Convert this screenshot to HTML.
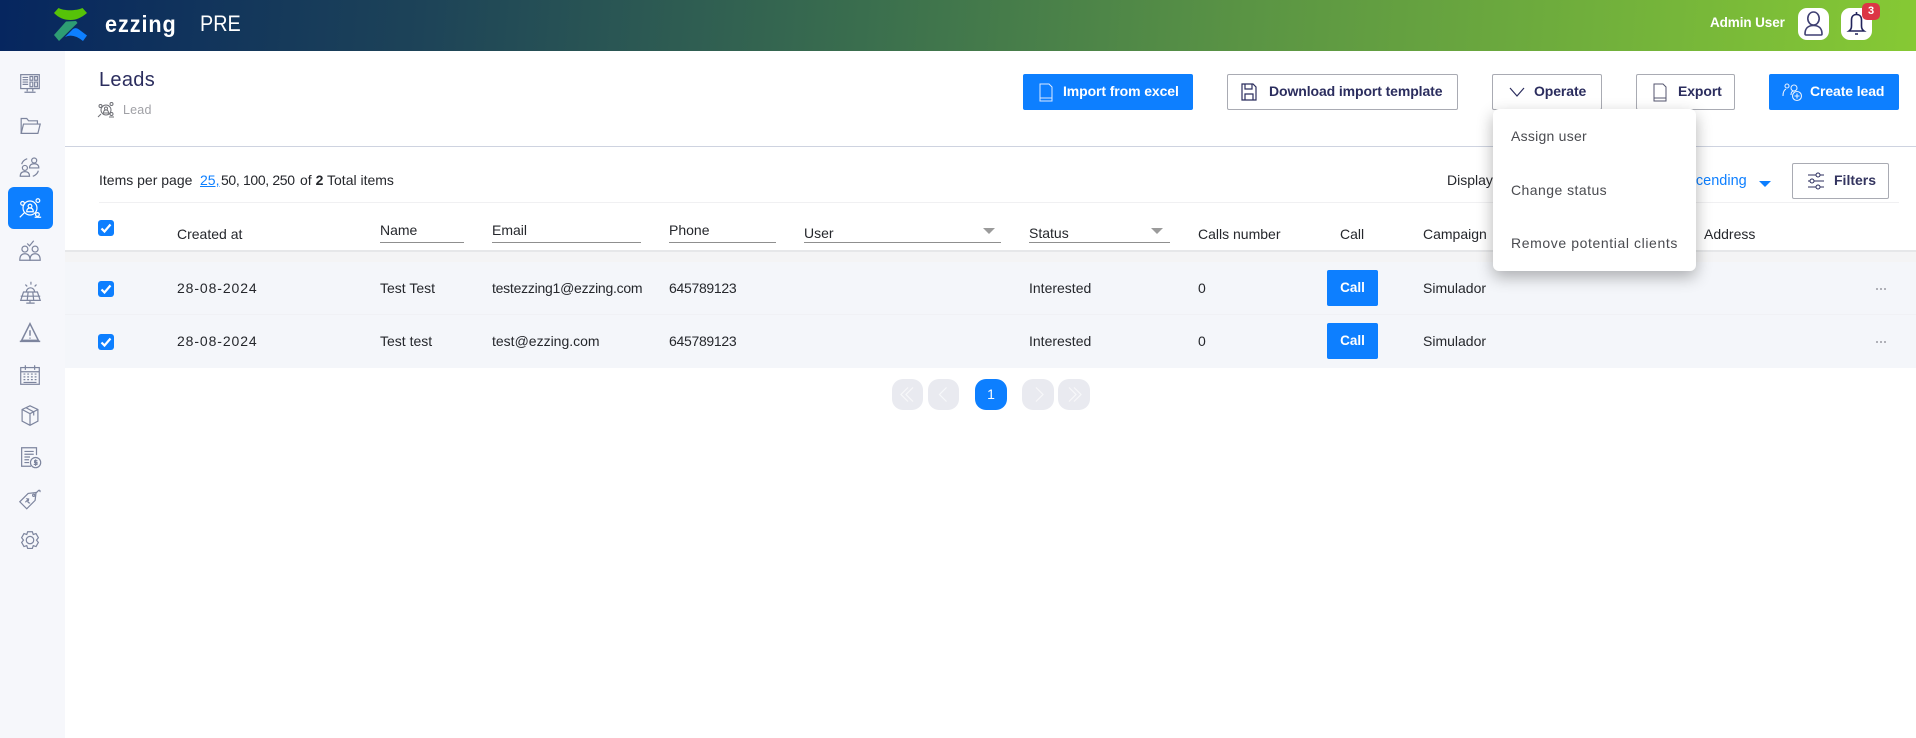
<!DOCTYPE html>
<html lang="en"><head><meta charset="utf-8"><title>Leads</title>
<style>
*{box-sizing:border-box}
html,body{margin:0;padding:0;width:1916px;height:738px;overflow:hidden;background:#fff;font-family:"Liberation Sans",sans-serif;color:#212529}
.a{position:absolute}
.t{position:absolute;white-space:nowrap;font-size:14px;line-height:20px;height:20px;color:#25272c}
.btn{position:absolute;top:74px;height:36px;border-radius:2px;font-size:14px;font-weight:bold;line-height:36px;white-space:nowrap;letter-spacing:-.1px}
.blue{background:#0d7fff;color:#fff}
.out{background:#fff;border:1px solid #a9abb3;color:#2b2d5e}
.btn svg{position:absolute;top:8px}
.btn span{position:absolute;top:-1px}
.cb{position:absolute;left:98px;width:16px;height:16px;background:#0d7fff;border-radius:3px}
.ul{position:absolute;height:1px;background:#8f8f8f;top:242px}
.tri{position:absolute;width:0;height:0;border-left:6px solid transparent;border-right:6px solid transparent;border-top:6px solid #9b9b9b;top:228px}
.call{position:absolute;left:1327px;width:51px;height:36px;background:#0d7fff;border-radius:2px;color:#fff;font-weight:bold;font-size:13.5px;line-height:36px;text-align:center}
.pg{position:absolute;top:379px;height:31px;border-radius:11px;background:#e9eaf0}
.dot{position:absolute;width:2px;height:2px;border-radius:50%;background:#9a9ba2}
.ic{position:absolute;left:17px;width:26px;height:26px;fill:none;stroke:#7d859e;stroke-width:1.3}
.mi{position:absolute;left:1511px;font-size:14px;line-height:20px;color:#4a4b50;letter-spacing:.25px;white-space:nowrap}
.num{letter-spacing:-.3px}
.date{letter-spacing:.9px}
</style></head><body>

<!-- top bar -->
<div class="a" style="left:0;top:0;width:1916px;height:51px;background:linear-gradient(95deg,#06265f 0%,#1d4358 22%,#3a6e4e 45%,#5a9444 65%,#86c934 100%)"></div>
<svg class="a" style="left:40px;top:0" width="70" height="50" viewBox="0 0 70 50">
<path d="M14 13L18.500 8C24 11 36 11 42.500 8L47 13C41 18 36 20 30.500 20C24 20 19 18 14 13Z" fill="#56c208"/>
<path d="M26 21.500L36 21L37.500 23L19 41L14 35Z" fill="#2e9d73"/>
<path d="M25 37L33 29Q36 27 39 29.500L47 35.500L43 41Q33 33 25 37Z" fill="#0d7fff"/>
</svg>
<div class="t" style="left:105px;top:10px;font-size:23px;line-height:28px;height:28px;font-weight:bold;color:#fff;letter-spacing:1px;transform:scaleX(.94);transform-origin:left">ezzing</div>
<div class="t" style="left:200px;top:10px;font-size:22px;line-height:28px;height:28px;color:#fff;transform:scaleX(.9);transform-origin:left">PRE</div>
<div class="t" style="left:1710px;top:13px;font-size:13.5px;color:#fff;font-weight:bold;letter-spacing:-.1px">Admin User</div>
<div class="a" style="left:1798px;top:8px;width:31px;height:32px;background:#fff;border-radius:9px"></div>
<svg class="a" style="left:1798px;top:8px" width="31" height="32" viewBox="0 0 31 32" fill="none" stroke="#3e3f72" stroke-width="1.6"><ellipse cx="15.500" cy="10.500" rx="5.700" ry="6.500"/><path d="M7 26c0-6 3.500-8.500 8.500-8.500S24 20 24 26c0 .7-.5 1-1 1H8c-.6 0-1-.4-1-1z"/></svg>
<div class="a" style="left:1841px;top:8px;width:31px;height:32px;background:#fff;border-radius:9px"></div>
<svg class="a" style="left:1841px;top:8px" width="31" height="32" viewBox="0 0 31 32" fill="none" stroke="#22245c" stroke-width="1.6"><path d="M15.500 4v2.500M10.500 12c0-3.500 2-5.500 5-5.500s5 2 5 5.500v6c0 2 1 4 2.500 5H8c1.500-1 2.500-3 2.500-5zM8 23h15M14 26h3"/></svg>
<div class="a" style="left:1862px;top:3px;width:18px;height:17px;background:#dc3545;border-radius:5px;color:#fff;font-size:11px;font-weight:bold;line-height:17px;text-align:center">3</div>

<!-- sidebar -->
<div class="a" style="left:0;top:51px;width:65px;height:687px;background:#f6f7fb"></div>
<div class="a" style="left:8px;top:187px;width:45px;height:42px;background:#0d7fff;border-radius:6px"></div>

<svg class="ic" style="top:70px" viewBox="0 0 28 28"><rect x="4" y="5" width="20" height="15"/><path d="M6 8h6M6 10.500h6M6 13h6M6 15.500h6M14 7h3v4h-3zM19 7h3v4h-3zM14 13h3v5h-3zM19 13h3v5h-3zM11 20v3M17 20v3M8 24h12" /></svg>
<svg class="ic" style="top:112px" viewBox="0 0 28 28"><path d="M6 23H4.500V7h6l2 2.500H22V13"/><path d="M7 13h18l-2.500 10H4.500z"/></svg>
<svg class="ic" style="top:154px" viewBox="0 0 28 28"><circle cx="18.500" cy="7" r="2.700"/><path d="M13.500 15c0-3 2-4.500 5-4.500s5 1.500 5 4.500z"/><circle cx="8.500" cy="15" r="2.700"/><path d="M3.500 24c0-3.500 2-5 5-5s5 1.500 5 5z"/><path d="M5 11c.8-3 3-5 6-6M23 18c-.8 3-3 5-6 6"/></svg>
<svg class="ic" style="top:195px;stroke:#fff" viewBox="0 0 28 28"><circle cx="14" cy="14" r="7.500"/><circle cx="14" cy="12" r="2"/><path d="M10.500 18c0-3 1.500-4 3.500-4s3.500 1 3.500 4z"/><circle cx="6" cy="9" r="2"/><circle cx="22.500" cy="6" r="2"/><circle cx="22" cy="21" r="2"/><path d="M3 24l5-5M19 24h7"/></svg>
<svg class="ic" style="top:237px" viewBox="0 0 28 28"><circle cx="8.500" cy="13" r="3.200"/><path d="M3 25c0-5 2-7 5.500-7s5.500 2 5.500 7z"/><circle cx="19.500" cy="13" r="3.200"/><path d="M14 25c0-5 2-7 5.500-7s5.500 2 5.500 7z"/><path d="M11 7l2.500 2.500L18 4"/></svg>
<svg class="ic" style="top:279px" viewBox="0 0 28 28"><path d="M7 14h15l3 9H4zM4 18.500h21M12 14l-1 9M17 14l1 9M14 23v3M10 26h9M10 14a4.500 4.500 0 0 1 9 0M15 3v3M9 6l2 2M21 6l-2 2"/></svg>
<svg class="ic" style="top:320px;stroke-width:1.600" viewBox="0 0 28 28"><path d="M14 4L23 22H5zM14 11v6M14 19v1M3 23h22"/></svg>
<svg class="ic" style="top:362px" viewBox="0 0 28 28"><rect x="4" y="6" width="20" height="18"/><path d="M9 3.500v5M19 3.500v5M4 10.500h20M7 13h2M11 13h2M15 13h2M19 13h2M7 16h2M11 16h2M15 16h2M19 16h2M7 19h2M11 19h2M15 19h2M19 19h2M7 22h14"/></svg>
<svg class="ic" style="top:403px" viewBox="0 0 28 28"><path d="M14 3l8.500 4v12.500L14 24l-8.500-4.500V7zM5.500 7l8.500 4.500L22.500 7M14 11.500V24M9.500 5l8.500 4.500v4"/></svg>
<svg class="ic" style="top:444px" viewBox="0 0 28 28"><path d="M21 12V4H5v20h10"/><path d="M8 8h10M8 11h10M8 14h6M8 17h5M8 20h5"/><circle cx="20" cy="20" r="5.500"/><path d="M22 18h-3v2h2.500v2H18M20 16.500v7"/></svg>
<svg class="ic" style="top:486px" viewBox="0 0 28 28"><path d="M21 7L12 8 3 17l7.500 7.500 9-9 1-8.500z"/><circle cx="18" cy="10" r="1.200"/><path d="M20 8l3-3c1-1 2.500 0 1.500 1.500M9 17.500l4-4M10 14c1-1 3 1 2 2s1 3 2 2"/></svg>
<svg class="ic" style="top:528px" viewBox="0 0 28 28"><path d="M11.500 4h5l1 3 3-1 2.500 4.500-2 2.500 2 2.500-2.500 4.500-3-1-1 3h-5l-1-3-3 1L5 15.500 7 13l-2-2.500L7.500 6l3 1z"/><circle cx="14" cy="13" r="4"/></svg>

<!-- title -->
<div class="t" style="left:99px;top:68px;font-size:20px;line-height:24px;height:24px;color:#2b2d5e;letter-spacing:.3px">Leads</div>
<svg class="a" style="left:97px;top:101px" width="18" height="18" viewBox="0 0 18 18" fill="none" stroke="#6f7076" stroke-width="1"><circle cx="9" cy="9" r="5"/><circle cx="9" cy="7.500" r="1.500"/><path d="M6.500 12c0-2 1-3 2.500-3s2.500 1 2.500 3zM1 16l3-3M12 16h5"/><circle cx="3.500" cy="5" r="1.500"/><circle cx="14.500" cy="3" r="1.500"/><circle cx="14.500" cy="13" r="1.500"/></svg>
<div class="t" style="left:123px;top:100px;font-size:12.500px;color:#a0a1a6;letter-spacing:.2px">Lead</div>
<div class="a" style="left:65px;top:146px;width:1851px;height:1px;background:#ced3e0"></div>

<!-- buttons -->
<div class="btn blue" style="left:1023px;width:170px"><svg style="left:14px" width="18" height="20" viewBox="0 0 18 20" fill="none" stroke="#dbe9ff" stroke-width="1"><path d="M3 2h9l3 3v14H3zM3 16h12"/></svg><span style="left:40px">Import from excel</span></div>
<div class="btn out" style="left:1227px;width:231px;line-height:34px"><svg style="left:12px;top:7px" width="18" height="20" viewBox="0 0 18 20" fill="none" stroke="#2b2d5e" stroke-width="1.200"><path d="M2 2h11l3 3v13H2zM5 2v5h7V2M5 18v-6h8v6"/></svg><span style="left:41px">Download import template</span></div>
<div class="btn out" style="left:1492px;width:110px;line-height:34px"><svg style="left:15px;top:7px" width="18" height="20" viewBox="0 0 18 20" fill="none" stroke="#2b2d5e" stroke-width="1.200"><path d="M2 6l7 8 7-8"/></svg><span style="left:41px">Operate</span></div>
<div class="btn out" style="left:1636px;width:99px;line-height:34px"><svg style="left:14px;top:7px" width="18" height="20" viewBox="0 0 18 20" fill="none" stroke="#55566f" stroke-width="1"><path d="M3 2h9l3 3v14H3zM3 16h12"/></svg><span style="left:41px">Export</span></div>
<div class="btn blue" style="left:1769px;width:130px"><svg style="left:13px;top:8px" width="22" height="20" viewBox="0 0 22 20" fill="none" stroke="#e4efff" stroke-width="1.100"><circle cx="12" cy="6" r="3"/><path d="M1 14c0-4 1-6 3-7M9 13c0-3 1-4 3-4"/><circle cx="5" cy="4" r="2"/><circle cx="15" cy="14" r="4.500"/><path d="M15 11.500v5M12.500 14h5"/></svg><span style="left:41px">Create lead</span></div>

<!-- toolbar -->
<div class="t" style="left:99px;top:170px;font-size:14px">Items per page</div>
<div class="t" style="left:200px;top:170px;font-size:14px;color:#0d7fff;text-decoration:underline">25,</div>
<div class="t" style="left:221px;top:170px;font-size:14px;letter-spacing:-.35px">50, 100, 250</div>
<div class="t" style="left:300px;top:170px;font-size:14px">of <b>2</b> Total items</div>
<div class="t" style="left:1447px;top:170px;font-size:14px">Display</div>
<div class="t" style="left:1679px;top:171px;font-size:14.500px;color:#0d7fff">Ascending</div>
<div class="a" style="left:1759px;top:181px;width:0;height:0;border-left:6px solid transparent;border-right:6px solid transparent;border-top:6px solid #0d7fff"></div>
<div class="a" style="left:1792px;top:163px;width:97px;height:36px;border:1px solid #a9abb3;border-radius:2px;background:#fff"></div>
<svg class="a" style="left:1807px;top:172px" width="18" height="18" viewBox="0 0 18 18" fill="none" stroke="#2b2d5e" stroke-width="1"><path d="M1 3h16M1 9h16M1 15h16"/><circle cx="11" cy="3" r="2" fill="#fff"/><circle cx="5" cy="9" r="2" fill="#fff"/><circle cx="11" cy="15" r="2" fill="#fff"/></svg>
<div class="t" style="left:1834px;top:170px;font-size:14px;font-weight:bold;color:#33345f">Filters</div>
<div class="a" style="left:99px;top:202px;width:1800px;height:1px;background:#f0f0f2"></div>

<!-- table header -->
<div class="cb" style="top:220px"><svg width="16" height="16" viewBox="0 0 16 16" fill="none" stroke="#fff" stroke-width="2.200"><path d="M3.500 8.500l3 3 6-7"/></svg></div>
<div class="t" style="left:177px;top:224px">Created at</div>
<div class="t" style="left:380px;top:220px">Name</div><div class="ul" style="left:380px;width:84px"></div>
<div class="t" style="left:492px;top:220px">Email</div><div class="ul" style="left:492px;width:149px"></div>
<div class="t" style="left:669px;top:220px">Phone</div><div class="ul" style="left:669px;width:107px"></div>
<div class="t" style="left:804px;top:223px">User</div><div class="ul" style="left:804px;width:197px"></div><div class="tri" style="left:983px"></div>
<div class="t" style="left:1029px;top:223px">Status</div><div class="ul" style="left:1029px;width:141px"></div><div class="tri" style="left:1151px"></div>
<div class="t" style="left:1198px;top:224px">Calls number</div>
<div class="t" style="left:1340px;top:224px">Call</div>
<div class="t" style="left:1423px;top:224px">Campaign</div>
<div class="t" style="left:1704px;top:224px">Address</div>
<div class="a" style="left:65px;top:250px;width:1851px;height:2px;background:#e6e7e9"></div>
<div class="a" style="left:65px;top:252px;width:1851px;height:10px;background:#f4f4f5"></div>

<!-- rows -->
<div class="a" style="left:65px;top:262px;width:1851px;height:106px;background:#f4f6fa"></div>
<div class="a" style="left:65px;top:314px;width:1851px;height:1px;background:#f0f1f5"></div>

<div class="cb" style="top:281px"><svg width="16" height="16" viewBox="0 0 16 16" fill="none" stroke="#fff" stroke-width="2.200"><path d="M3.500 8.500l3 3 6-7"/></svg></div>
<div class="t date" style="left:177px;top:278px">28-08-2024</div>
<div class="t" style="left:380px;top:278px">Test Test</div>
<div class="t" style="left:492px;top:278px;letter-spacing:-.25px">testezzing1@ezzing.com</div>
<div class="t num" style="left:669px;top:278px">645789123</div>
<div class="t" style="left:1029px;top:278px">Interested</div>
<div class="t" style="left:1198px;top:278px">0</div>
<div class="call" style="top:270px">Call</div>
<div class="t" style="left:1423px;top:278px">Simulador</div>
<div class="dot" style="left:1876px;top:288px"></div><div class="dot" style="left:1880px;top:288px"></div><div class="dot" style="left:1884px;top:288px"></div>

<div class="cb" style="top:334px"><svg width="16" height="16" viewBox="0 0 16 16" fill="none" stroke="#fff" stroke-width="2.200"><path d="M3.500 8.500l3 3 6-7"/></svg></div>
<div class="t date" style="left:177px;top:331px">28-08-2024</div>
<div class="t" style="left:380px;top:331px">Test test</div>
<div class="t" style="left:492px;top:331px">test@ezzing.com</div>
<div class="t num" style="left:669px;top:331px">645789123</div>
<div class="t" style="left:1029px;top:331px">Interested</div>
<div class="t" style="left:1198px;top:331px">0</div>
<div class="call" style="top:323px">Call</div>
<div class="t" style="left:1423px;top:331px">Simulador</div>
<div class="dot" style="left:1876px;top:341px"></div><div class="dot" style="left:1880px;top:341px"></div><div class="dot" style="left:1884px;top:341px"></div>

<!-- pagination -->
<div class="pg" style="left:892px;width:31px"><svg width="31" height="31" viewBox="0 0 31 31" fill="none" stroke="#f7f8fa" stroke-width="1.200"><path d="M16 8.500l-7 7 7 7M21 8.500l-7 7 7 7"/></svg></div>
<div class="pg" style="left:928px;width:31px"><svg width="31" height="31" viewBox="0 0 31 31" fill="none" stroke="#f7f8fa" stroke-width="1.200"><path d="M18.500 8.500l-7 7 7 7"/></svg></div>
<div class="pg" style="left:975px;width:32px;background:#0d7fff;color:#fff;font-size:14px;line-height:31px;text-align:center">1</div>
<div class="pg" style="left:1022px;width:32px"><svg width="32" height="31" viewBox="0 0 32 31" fill="none" stroke="#f7f8fa" stroke-width="1.200"><path d="M14 8.500l7 7-7 7"/></svg></div>
<div class="pg" style="left:1058px;width:32px"><svg width="32" height="31" viewBox="0 0 32 31" fill="none" stroke="#f7f8fa" stroke-width="1.200"><path d="M11 8.500l7 7-7 7M16 8.500l7 7-7 7"/></svg></div>

<!-- dropdown -->
<div class="a" style="left:1493px;top:109px;width:203px;height:162px;background:#fff;border-radius:6px;box-shadow:0 6px 16px rgba(0,0,0,.3)"></div>
<div class="mi" style="top:126px">Assign user</div>
<div class="mi" style="top:180px;letter-spacing:.45px">Change status</div>
<div class="mi" style="top:233px;letter-spacing:.6px">Remove potential clients</div>
</body></html>
